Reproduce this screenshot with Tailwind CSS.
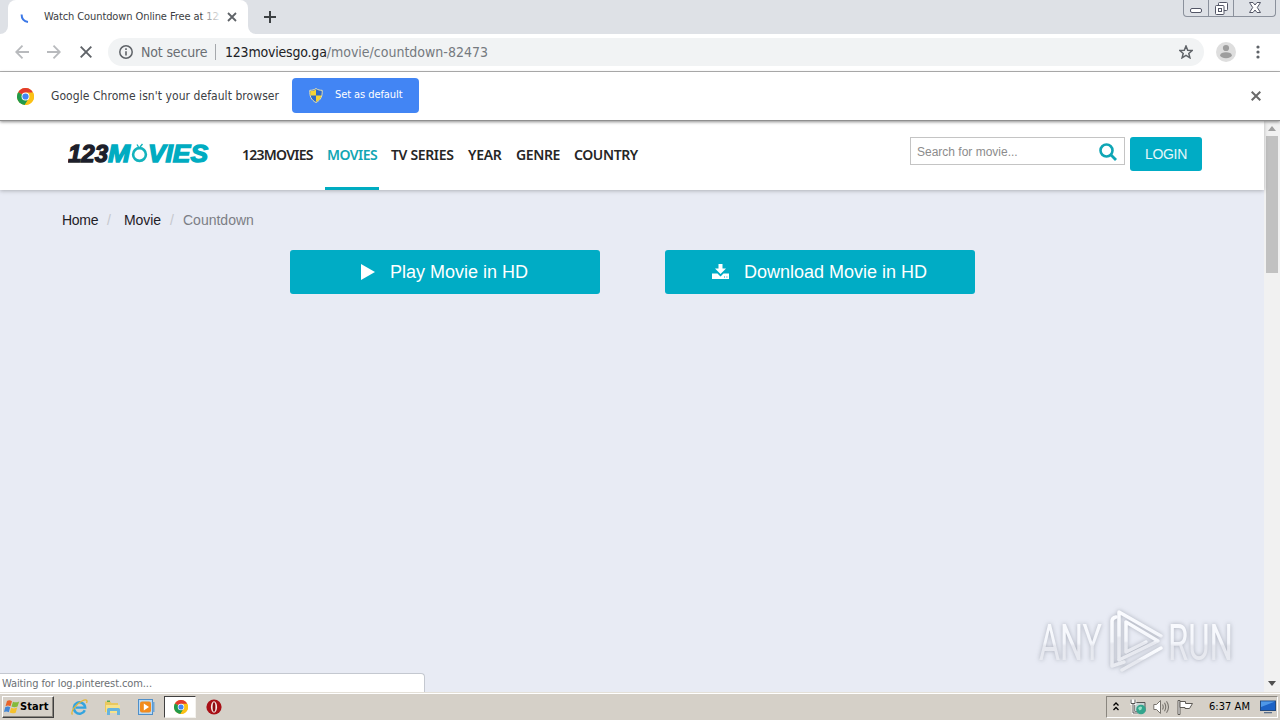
<!DOCTYPE html>
<html lang="en">
<head>
  <meta charset="UTF-8">
  <meta name="viewport" content="width=device-width, initial-scale=1.0">
  <title>Watch Countdown Online Free at 123Movies</title>
  <script src="https://cdn.jsdelivr.net/npm/@tailwindcss/browser@4"></script>
</head>
<body class="w-[1280px] h-[720px] overflow-hidden flex flex-col bg-white font-['DejaVu_Sans_Condensed','DejaVu_Sans',sans-serif] whitespace-nowrap">

  <!-- Shared chrome logo -->
  <svg class="hidden">
    <symbol id="chrome" viewBox="0 0 24 24">
      <circle cx="12" cy="12" r="12" fill="#fbc116"/>
      <path d="M12 12 L1.6 6 A12 12 0 0 1 22.4 6 Z" fill="#e33b2e"/>
      <path d="M1.6 6 A12 12 0 0 0 11 24 L16.8 14.8 L12 12 Z" fill="#229a4b"/>
      <path d="M12 6.5 H22.7 A12 12 0 0 1 11 24 L17 14 Z" fill="#fbc116"/>
      <circle cx="12" cy="12" r="5.6" fill="#fff"/>
      <circle cx="12" cy="12" r="4.4" fill="#4285f4"/>
    </symbol>
  </svg>

  <!-- Tab strip -->
  <div class="h-[34px] shrink-0 bg-[#dee1e6] flex items-start">
    <div class="w-2 h-[34px] bg-white"><div class="h-full bg-[#dee1e6] rounded-br-lg"></div></div>
    <div class="w-[240px] h-[34px] bg-white rounded-t-lg flex items-center pl-3">
      <svg class="w-3 h-3 mt-[6px]" viewBox="0 0 12 12" fill="none" stroke="#3b78e7" stroke-width="2"><path d="M1.6 0.5 C1.6 4.5 4 7.4 8 8"/></svg>
      <div class="relative ml-[12px] w-[174px] text-[11px] leading-4 tracking-[-0.1px] text-[#3c4043]">Watch Countdown Online Free at 12
        <div class="absolute right-0 top-0 w-4 h-4 bg-gradient-to-r from-white/30 to-white/80"></div>
      </div>
      <svg class="w-[10px] h-[10px] ml-[9px]" viewBox="0 0 10 10" stroke="#5f6368" stroke-width="1.8"><path d="M1 1 L9 9 M9 1 L1 9"/></svg>
    </div>
    <div class="w-2 h-[34px] bg-white"><div class="h-full bg-[#dee1e6] rounded-bl-lg"></div></div>
    <svg class="w-3 h-3 ml-2 mt-[11px]" viewBox="0 0 12 12" stroke="#3c4043" stroke-width="2"><path d="M6 0 V12 M0 6 H12"/></svg>
    <div class="ml-auto mr-1 w-[93px] h-[17px] border border-t-0 border-[#8b919c] rounded-b-[4px] flex">
      <div class="w-[25px] border-r border-[#8b919c] flex justify-center items-center"><svg class="w-[13px] h-[5px] mt-[5px]" viewBox="0 0 13 5"><rect x="0.5" y="0.5" width="11" height="4" rx="1.5" fill="#fff" stroke="#535666"/></svg></div>
      <div class="w-[25px] border-r border-[#8b919c] flex justify-center items-center"><svg class="w-[13px] h-[13px]" viewBox="0 0 13 13" fill="#fff" stroke="#535666"><rect x="3.5" y="0.5" width="9" height="8" rx="1"/><rect x="0.5" y="3.5" width="8.5" height="9" rx="1"/><rect x="3.5" y="6.5" width="3" height="3"/></svg></div>
      <div class="grow flex justify-center items-center"><svg class="w-[12px] h-[11px] mb-px" viewBox="0 0 12 11" fill="#fff" stroke="#535666"><path d="M0.5 0.5 H4 L6 3 L8 0.5 H11.5 L8.3 5.5 L11.5 10.5 H8 L6 8 L4 10.5 H0.5 L3.7 5.5 Z"/></svg></div>
    </div>
  </div>

  <!-- Toolbar -->
  <div class="h-[38px] shrink-0 bg-white border-b border-[#b5b5b5] flex items-center pl-[15px] pb-px">
    <svg class="w-[14px] h-[14px]" viewBox="0 0 14 14" fill="none" stroke="#b8babd" stroke-width="1.8"><path d="M14 7 H1.5 M7.5 0.7 L1.2 7 L7.5 13.3"/></svg>
    <svg class="w-[14px] h-[14px] ml-[18px]" viewBox="0 0 14 14" fill="none" stroke="#b8babd" stroke-width="1.8"><path d="M0 7 H12.5 M6.5 0.7 L12.8 7 L6.5 13.3"/></svg>
    <svg class="w-3 h-3 ml-[19px]" viewBox="0 0 12 12" stroke="#5f6368" stroke-width="1.9"><path d="M0.7 0.7 L11.3 11.3 M11.3 0.7 L0.7 11.3"/></svg>
    <div class="ml-4 w-[1096px] h-7 rounded-full bg-[#f1f3f4] flex items-center pl-[11px] text-[14px] leading-5">
      <svg class="w-[14px] h-[14px]" viewBox="0 0 14 14" fill="none" stroke="#5f6368"><circle cx="7" cy="7" r="6.2" stroke-width="1.5"/><path d="M7 6.2 V10.6 M7 3.3 V4.9" stroke-width="1.6"/></svg>
      <span class="ml-2 w-[67px] pb-px text-[#6a6e73] tracking-[-0.15px]">Not secure</span>
      <span class="ml-[7px] w-px h-4 bg-[#a5a8ac]"></span>
      <span class="ml-[9px] pb-px text-[#202124] tracking-[-0.2px]">123moviesgo.ga<span class="text-[#757a7f] tracking-[0px]">/movie/countdown-82473</span></span>
      <svg class="w-[14px] h-[14px] ml-auto mr-[11px]" viewBox="0 0 14 14" fill="none" stroke="#5f6368" stroke-width="1.5"><path d="M7 1 L8.7 5.2 L13.2 5.5 L9.8 8.4 L10.9 12.8 L7 10.4 L3.1 12.8 L4.2 8.4 L0.8 5.5 L5.3 5.2 Z"/></svg>
    </div>
    <svg class="w-5 h-5 ml-3" viewBox="0 0 20 20"><circle cx="10" cy="10" r="10" fill="#dedede"/><circle cx="10" cy="6" r="3.1" fill="#9d9d9d"/><ellipse cx="10" cy="13.2" rx="5.8" ry="3" fill="#9d9d9d"/></svg>
    <svg class="w-1 h-[14px] ml-5" viewBox="0 0 4 14" fill="#5f6368"><circle cx="2" cy="2" r="1.6"/><circle cx="2" cy="7" r="1.6"/><circle cx="2" cy="12" r="1.6"/></svg>
  </div>

  <!-- Default browser bar -->
  <div class="relative z-10 h-[49px] shrink-0 bg-white border-b border-[#8f8f8f] shadow-[0_1px_3px_rgba(0,0,0,0.45)] flex items-center pl-[17px]">
    <svg class="w-[17px] h-[17px]"><use href="#chrome"/></svg>
    <span class="ml-[17px] w-[229px] text-[12px] tracking-[0.06px] text-[#3c4043]">Google Chrome isn't your default browser</span>
    <div class="ml-3 mb-[2px] w-[127px] h-[35px] rounded-[4px] bg-[#4285f4] flex items-center pl-[17px]">
      <svg class="w-[14px] h-[15px]" viewBox="0 0 14 15"><path d="M7 0.5 C5 2 3 2.3 0.8 2.3 C0.5 8 2 12 7 14.5 C12 12 13.5 8 13.2 2.3 C11 2.3 9 2 7 0.5Z" fill="#2e6ac8" stroke="#e9e2b0"/><path d="M7 1.5 V7.5 H1.5 C1.2 6 1.3 4 1.4 3 C3.5 3 5 2.6 7 1.5Z M7 7.5 H12.5 C12 10.5 10 12.5 7 13.8Z" fill="#f6d333"/></svg>
      <span class="ml-3 text-[11px] tracking-[-0.08px] text-white">Set as default</span>
    </div>
    <svg class="w-[10px] h-[10px] ml-auto mr-[19px]" viewBox="0 0 10 10" stroke="#6a6a6a" stroke-width="2"><path d="M0.7 0.7 L9.3 9.3 M9.3 0.7 L0.7 9.3"/></svg>
  </div>

  <div class="relative h-[571px] shrink-0 flex font-['Liberation_Sans',sans-serif]">
    <!-- Page -->
    <main class="w-[1264px] bg-[#e8ebf4]">
      <header class="relative h-[69px] bg-white shadow-[0_1px_4px_rgba(0,0,0,0.25)] flex">
        <div class="ml-[68px] mt-[20px] w-[142px] h-6">
          <svg class="w-[142px] h-6" viewBox="0 0 142 24" font-family="Liberation Sans" font-weight="bold" font-style="italic" font-size="23" stroke-width="1.3">
            <text x="0" y="20.5" textLength="40" lengthAdjust="spacingAndGlyphs" fill="#1d1f2b" stroke="#1d1f2b">123</text>
            <text x="40" y="20.5" textLength="22" lengthAdjust="spacingAndGlyphs" fill="#00acc1" stroke="#00acc1">M</text>
            <circle cx="71.5" cy="13.5" r="6.4" fill="none" stroke="#14b3bd" stroke-width="2.6"/>
            <path d="M70.5 6 L69 3.5 M72 6 L74.5 3" fill="none" stroke="#14b3bd" stroke-width="1.4"/>
            <text x="80" y="20.5" textLength="60" lengthAdjust="spacingAndGlyphs" fill="#00acc1" stroke="#00acc1">VIES</text>
          </svg>
        </div>
        <nav class="ml-[30px] flex text-[14px] leading-[67px] font-semibold text-[#262626] font-['Noto_Sans',sans-serif]">
          <a class="w-[85px] pl-[2px] tracking-[-0.75px]">123MOVIES</a>
          <a class="w-[54px] h-[69px] pl-[2px] text-[#12a6b4] border-b-3 border-[#00acc1] tracking-[-0.55px]">MOVIES</a>
          <a class="ml-3 w-[77px] tracking-[-0.35px]">TV SERIES</a>
          <a class="w-12 tracking-[-0.3px]">YEAR</a>
          <a class="w-[58px] tracking-[-0.4px]">GENRE</a>
          <a class="tracking-[-0.4px]">COUNTRY</a>
        </nav>
        <div class="absolute left-[910px] top-4 flex items-start gap-[5px]">
          <div class="w-[215px] h-7 border border-[#c4c4c4] bg-white flex items-center justify-between pl-[6px] pr-[7px] text-[12px] text-[#8c8c8c]">
            <span class="pt-[2px]">Search for movie...</span>
            <svg class="w-[18px] h-[18px] mt-[2px]" viewBox="0 0 18 18" fill="none" stroke="#0fa6b5"><circle cx="7.5" cy="7.5" r="6" stroke-width="2.6"/><path d="M11.8 11.8 L17 17" stroke-width="2.8"/></svg>
          </div>
          <div class="w-[72px] h-[34px] rounded-[3px] bg-[#00acc5] text-center leading-[34px] text-[14px] tracking-[-0.3px] text-white/90">LOGIN</div>
        </div>
      </header>

      <div class="flex pt-[20px] pl-[62px] text-[14px] leading-5 text-[#1f2026]">
        <span class="w-[45px] tracking-[-0.3px]">Home</span><span class="w-[17px] text-[#c6c8ce]">/</span>
        <span class="w-[46px] tracking-[-0.1px]">Movie</span><span class="w-[13px] text-[#c6c8ce]">/</span>
        <span class="text-[#7c7e85]">Countdown</span>
      </div>

      <div class="flex mt-5 ml-[290px] gap-[65px] text-[18px] text-white">
        <div class="w-[310px] h-11 rounded-[3px] bg-[#00acc5] flex items-center pl-[71px]">
          <svg class="w-[14px] h-4" viewBox="0 0 14 16" fill="#fff"><path d="M0 0 L14 8 L0 16 Z"/></svg>
          <span class="ml-[15px]">Play Movie in HD</span>
        </div>
        <div class="w-[310px] h-11 rounded-[3px] bg-[#00acc5] flex items-center pl-[47px]">
          <svg class="w-[17px] h-[15px] mb-[2px]" viewBox="0 0 17 15" fill="#fff"><path d="M6.5 0 H10.5 V4.5 H14 L8.5 10 L3 4.5 H6.5 Z"/><path d="M0 9.5 H5.5 L8.5 12.5 L11.5 9.5 H17 V15 H0 Z"/><path d="M12 12.5 H13 V13.5 H12 Z M14.4 12.5 H15.4 V13.5 H14.4 Z" fill="#00acc5"/></svg>
          <span class="ml-[15px]">Download Movie in HD</span>
        </div>
      </div>
    </main>

    <!-- Scrollbar -->
    <div class="w-4 bg-[#f1f1f1] flex flex-col items-center justify-between pt-[5px] pb-[6px]">
      <div class="flex flex-col items-center">
        <svg class="w-2 h-[5px]" viewBox="0 0 8 5" fill="#a0a0a0"><path d="M4 0 L8 5 H0 Z"/></svg>
        <div class="mt-[5px] w-3 h-[137px] bg-[#c1c1c1]"></div>
      </div>
      <svg class="w-2 h-[5px]" viewBox="0 0 8 5" fill="#505050"><path d="M0 0 H8 L4 5 Z"/></svg>
    </div>

    <!-- Status bubble -->
    <div class="absolute left-0 bottom-0 w-[425px] h-[19px] bg-white border-t border-r border-[#c4c8d0] rounded-tr-[4px] pl-[2px] text-[11px] leading-[19px] tracking-[-0.1px] text-[#6b6f74] font-['DejaVu_Sans_Condensed','DejaVu_Sans',sans-serif]">Waiting for log.pinterest.com...</div>

    <!-- Watermark -->
    <svg class="absolute left-[1034px] top-[484px] w-[204px] h-[70px] overflow-visible drop-shadow-[0_0_2px_rgba(110,115,130,0.5)]" viewBox="0 0 204 70" font-family="Roboto">
      <defs>
        <linearGradient id="wm" x1="0" y1="0" x2="0" y2="1"><stop offset="0" stop-color="#fbfcff"/><stop offset="0.5" stop-color="#f4f6fb"/><stop offset="0.55" stop-color="#e6e8ef"/><stop offset="1" stop-color="#e9ebf1"/></linearGradient>
      </defs>
      <g fill="url(#wm)" font-size="50">
        <text x="5" y="55" textLength="63" lengthAdjust="spacingAndGlyphs">ANY</text>
        <text x="134" y="55" textLength="65" lengthAdjust="spacingAndGlyphs">RUN</text>
      </g>
      <g fill="none" stroke="url(#wm)" stroke-width="3.5" stroke-linejoin="round" stroke-linecap="round">
        <path d="M90 57 L78 61 V16 Q78 13 82 12"/>
        <path d="M85 54 V7 L127 31"/>
        <path d="M85 55 L124 36 L92 17 V47 L112 37"/>
        <path d="M88 65 L127 43"/>
      </g>
    </svg>
  </div>

  <!-- Taskbar -->
  <footer class="h-7 shrink-0 bg-[#d5d0c8] border-t border-[#e4e0d8] shadow-[inset_0_1px_0_#fff] flex items-center pt-px text-[#000]">
    <div class="ml-[2px] w-[52px] h-[22px] border border-t-white border-l-white border-r-[#404040] border-b-[#404040] shadow-[inset_-1px_-1px_0_#8a867f] flex items-center pl-px">
      <svg class="w-4 h-4" viewBox="0 0 16 16"><path d="M3 2 Q5.5 0.5 8 2.3 L6.5 7.3 Q4 6 1.5 7.2Z" fill="#e8642b"/><path d="M9 2.8 Q12 4 15.2 2.4 L13.5 7.6 Q10.5 9 7.5 7.6Z" fill="#84ba3c"/><path d="M1.2 8.2 Q4 7 6.2 8.3 L4.8 13.2 Q2.5 12 0 13Z" fill="#4387d6"/><path d="M7.2 8.7 Q10 10.2 13.2 8.6 L11.7 13.8 Q8.5 15 5.7 13.6Z" fill="#f5c12e"/></svg>
      <span class="text-[11px] font-bold tracking-[0.1px]">Start</span>
    </div>
    <svg class="w-[17px] h-[17px] ml-[17px]" viewBox="0 0 17 17" fill="none"><path d="M13.8 11.2 A5.7 5.7 0 1 1 14.2 8.6 H4.5" stroke="#33a4df" stroke-width="2.4"/><path d="M1.5 15.5 C-1 13 5 5 11 2 C15 0 17 1 15.5 4" stroke="#e5b733" stroke-width="1.3"/></svg>
    <svg class="w-[17px] h-[17px] ml-[16px]" viewBox="0 0 17 17"><path d="M1 2.5 H6 L7.5 4 H14 V13 H1Z" fill="#e9c85f"/><path d="M3 1.5 H6 V3 H3Z" fill="#5baa52"/><path d="M2 6 H16 V14 H2Z" fill="#f7e28a"/><path d="M3 16 V10.5 Q3 9 4.5 9 H14.5 Q16 9 16 10.5 V16 H13 V12 H6 V16Z" fill="#68b4de"/></svg>
    <svg class="w-[17px] h-[17px] ml-[17px]" viewBox="0 0 17 17"><rect x="0.5" y="0.5" width="14" height="15" fill="#b9d9f3" stroke="#4f8fc9"/><rect x="14.5" y="3" width="2" height="10" fill="#6da5d8"/><rect x="2" y="2.5" width="11" height="11" rx="2" fill="#f28b1d"/><path d="M5.8 4.6 L11 8 L5.8 11.4Z" fill="#fff"/></svg>
    <div class="ml-[9px] w-8 h-[22px] bg-white border border-t-[#404040] border-l-[#404040] border-r-[#f4f2ee] border-b-[#f4f2ee] flex items-center justify-center"><svg class="w-[14px] h-[14px] ml-px"><use href="#chrome"/></svg></div>
    <svg class="w-4 h-4 ml-[10px]" viewBox="0 0 16 16"><circle cx="8" cy="8" r="7.6" fill="#a80f16"/><ellipse cx="8" cy="8" rx="3.1" ry="5.8" fill="#f5e8e6"/><ellipse cx="8" cy="8" rx="1.4" ry="4.8" fill="#8c0a10"/></svg>

    <!-- Tray -->
    <div class="ml-auto mr-[2px] w-[172px] h-[22px] border border-t-[#8a867f] border-l-[#8a867f] border-r-white border-b-white flex items-center pl-[6px]">
      <svg class="w-[6px] h-[9px] mb-[2px]" viewBox="0 0 6 9" fill="none" stroke="#000" stroke-width="1.3"><path d="M0.5 3.5 L3 1 L5.5 3.5 M0.5 8 L3 5.5 L5.5 8"/></svg>
      <svg class="w-[16px] h-[16px] ml-[11px]" viewBox="0 0 16 16"><path d="M4.5 3.5 H15 V12.5 H4.5Z" fill="#c8d4d5" stroke="#555"/><path d="M1 0.5 V4.5 H5 V0.5 M3 0.5 V8 M3 8 V14 H8" fill="none" stroke="#fff" stroke-width="2.6"/><path d="M1 0.5 V4.5 H5 V0.5 M3 4.5 V14 H8" fill="none" stroke="#555"/><circle cx="11" cy="10.5" r="4.8" fill="#32a58d"/><path d="M8 9 Q10 6.5 12 8 Q12 11 9.5 11.5Z" fill="#97e0c8"/></svg>
      <svg class="w-[17px] h-[16px] ml-[7px]" viewBox="0 0 17 16" fill="none" stroke="#77736d"><path d="M0.8 5.5 H3.5 L7.5 1.5 V14.5 L3.5 10.5 H0.8Z" fill="#fff"/><path d="M9.5 5.5 Q11 8 9.5 10.5 M11.5 3.8 Q14 8 11.5 12.2 M13.5 2.2 Q17.5 8 13.5 13.8" stroke-width="1.1"/></svg>
      <svg class="w-[17px] h-[15px] ml-[7px]" viewBox="0 0 17 15" stroke="#5e5b56"><path d="M1 0.5 H3 V14.5 H1Z" fill="#fff"/><path d="M3 1.5 H8.5 V3.5 H15.5 L12.5 8.5 H8 V7.5 H3Z" fill="#fff"/></svg>
      <span class="ml-[15px] w-[41px] text-[11px] tracking-[0.05px]">6:37 AM</span>
      <svg class="w-4 h-[14px] ml-[10px]" viewBox="0 0 16 14"><rect x="0.5" y="1" width="15" height="9.5" fill="#1c62c6" stroke="#234a80"/><path d="M1 1.5 H15 L1 7Z" fill="#4e97e8"/><path d="M4 12 H12 V13.3 H4Z" fill="#5b6f8a"/></svg>
    </div>
  </footer>

</body>
</html>
